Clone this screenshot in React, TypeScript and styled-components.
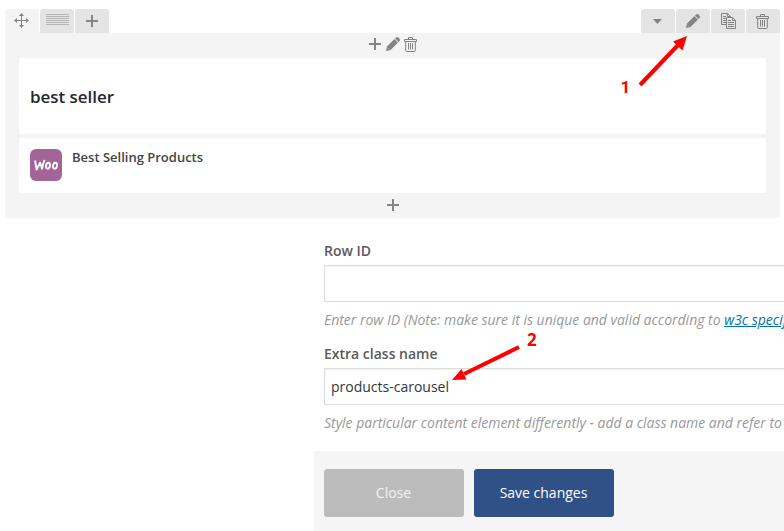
import React from "react";
import styled, { createGlobalStyle } from "styled-components";

const GlobalStyle = createGlobalStyle`
  * { box-sizing: border-box; }
  body {
    margin: 0;
    background: #fff;
    overflow: hidden;
    font-family: "Open Sans", sans-serif;
    font-size: 14px;
  }
`;

const Page = styled.main`
  position: relative;
  width: 784px;
  height: 531px;
  overflow: hidden;
  padding: 9px 0 0;
`;

const Builder = styled.section`
  width: 775px;
  margin-left: 5px;
`;

const Toolbar = styled.div`
  display: flex;
  justify-content: space-between;
  height: 24px;
`;

const TabGroup = styled.div`
  display: flex;
  gap: 1px;
`;

const Tab = styled.button<{ $active?: boolean }>`
  display: flex;
  width: 34px;
  height: 24px;
  padding: 0;
  border: 0;
  border-radius: 3px 3px 0 0;
  background: ${(p) => (p.$active ? "#f4f4f4" : "#e4e4e4")};
`;

const RowBody = styled.div`
  height: 185px;
  padding: 0 14px;
  background: #f4f4f4;
`;

const Controls = styled.div`
  display: flex;
  justify-content: center;
  height: 25px;
`;

const Card = styled.article<{ $height: number }>`
  display: flex;
  height: ${(p) => p.$height}px;
  padding: 11px;
  border-radius: 1px;
  background: #fff;
  & + & { margin-top: 4px; }
`;

const Heading = styled.h4`
  margin: 16px 0 0;
  font-size: 17px;
  line-height: 24px;
  font-weight: 600;
  color: #23282d;
  letter-spacing: -0.04px;
`;

const ElementTitle = styled.h5`
  margin: -2px 0 0 10px;
  font-size: 13px;
  line-height: 20px;
  font-weight: 600;
  color: #444;
`;

const Settings = styled.form`
  width: 520px;
  margin: 23px 0 0 314px;
`;

const Field = styled.div`
  height: 103px;
  padding-left: 10px;
`;

const Label = styled.label`
  display: block;
  height: 24px;
  line-height: 20px;
  font-weight: 600;
  color: #5b5b5b;
`;

const Input = styled.input`
  display: block;
  width: 600px;
  height: 37px;
  padding: 6px;
  border: 1px solid #ddd;
  border-radius: 0;
  outline: 0;
  box-shadow: inset 0 1px 2px rgba(0, 0, 0, 0.07);
  font: 14px "Open Sans", sans-serif;
  color: #32373c;
  background: #fff;
`;

const Hint = styled.p`
  margin: 8px 0 0;
  line-height: 20px;
  font-style: italic;
  letter-spacing: -0.016px;
  white-space: nowrap;
  color: #999;
`;

const Link = styled.a`
  color: #0073aa;
  text-decoration: underline;
`;

const Footer = styled.footer`
  display: flex;
  gap: 10px;
  height: 80px;
  margin-top: 4px;
  padding: 18px 10px;
  background: #f5f5f5;
`;

const Action = styled.button<{ $primary?: boolean }>`
  width: 140px;
  height: 48px;
  padding: 0 1px 2px 0;
  border: 0;
  border-radius: 3px;
  font: 14px "Open Sans", sans-serif;
  color: ${(p) => (p.$primary ? "#fff" : "#f3f3f3")};
  background: ${(p) => (p.$primary ? "#2f5187" : "#bcbcbc")};
`;

const Annotations = styled.svg`
  position: absolute;
  inset: 0;
  pointer-events: none;
`;

const Callout = styled.text<{ $family: string }>`
  font: 700 17px ${(p) => p.$family}, sans-serif;
  fill: #f00;
`;

const Glyph = styled.svg`
  display: block;
  flex: none;
  color: #848484;
`;

const Plus = () => <path d="M5 0h2v5h5v2H7v5H5V7H0V5h5z" fill="currentColor" />;

const Pencil = () => (
  <g fill="currentColor">
    <path d="M0 14l1-4.6L8.4 2l3.6 3.6L4.6 13z" />
    <path d="M9 1.4l1-1q1.2-.8 2.4.2l1 1q1 1.2.2 2.4l-1 1z" />
    <path d="M8.6 1.9l3.6 3.6" stroke="#d0d0d0" strokeWidth=".6" />
    <path d="M1.4 10.6l2 2" stroke="#d0d0d0" strokeWidth=".5" />
  </g>
);

const Trash = () => (
  <g fill="none" stroke="currentColor">
    <path d="M4.5 2V.5h4V2" />
    <path d="M.5 2.5h12v2H.5z" />
    <path d="M1.7 5v8.2q0 1.3 1.1 1.3h7.4q1.1 0 1.1-1.3V5M4.5 6v6.5M6.5 6v6.5M8.5 6v6.5" />
  </g>
);

const Copy = () => (
  <g fill="none" stroke="currentColor">
    <path d="M5.5 11.5h-5V.5h6l3 3v1M6.5.5v3h3" />
    <path d="M2 3.5h3M2 5.5h3M2 7.5h3M2 9.5h3" />
    <path d="M5.5 4.5h6l3 3v8h-9zM11.5 4.5v3h3M7 7.5h3M7 9.5h6M7 11.5h6M7 13.5h6" />
  </g>
);

const Move = () => (
  <g fill="currentColor">
    <path d="M7 2h1v11H7zM2 7h11v1H2z" />
    <path d="M7.5 0L10 3H5zM7.5 15L5 12h5zM0 7.5L3 5v5zM15 7.5L12 10V5z" />
  </g>
);

const TabIcon = ({ x, y, children }: { x: number; y: number; children: React.ReactNode }) => (
  <Glyph width="34" height="24">
    <g transform={`translate(${x} ${y})`}>{children}</g>
  </Glyph>
);

export default function App() {
  return (
    <>
      <GlobalStyle />
      <Page>
        <Builder>
          <Toolbar>
            <TabGroup>
              <Tab $active aria-label="Move row">
                <TabIcon x={9} y={4}><Move /></TabIcon>
              </Tab>
              <Tab aria-label="Row layout">
                <TabIcon x={6} y={5}>
                  <path d="M0 .5h23M0 2.5h23M0 4.5h23M0 6.5h23M0 8.5h23M0 10.5h23" stroke="#b5b5b5" />
                </TabIcon>
              </Tab>
              <Tab aria-label="Add column">
                <TabIcon x={11} y={6}><Plus /></TabIcon>
              </Tab>
            </TabGroup>
            <TabGroup>
              <Tab aria-label="Toggle row">
                <TabIcon x={12} y={10}><path d="M0 0h9L4.5 5z" fill="currentColor" /></TabIcon>
              </Tab>
              <Tab aria-label="Edit row">
                <TabIcon x={10} y={5}><Pencil /></TabIcon>
              </Tab>
              <Tab aria-label="Clone row">
                <TabIcon x={10} y={4}><Copy /></TabIcon>
              </Tab>
              <Tab aria-label="Delete row">
                <TabIcon x={10} y={5}><Trash /></TabIcon>
              </Tab>
            </TabGroup>
          </Toolbar>
          <RowBody>
            <Controls>
              <Glyph width="50" height="25">
                <g transform="translate(1 5)"><Plus /></g>
                <g transform="translate(18 4)"><Pencil /></g>
                <g transform="translate(36 4)"><Trash /></g>
              </Glyph>
            </Controls>
            <Card $height={76}>
              <Heading>best seller</Heading>
            </Card>
            <Card $height={55}>
              <Glyph width="32" height="32" aria-label="Woo">
                <rect width="32" height="32" rx="6" fill="#a46497" />
                <g fill="none" stroke="#fff" strokeWidth="1.9" strokeLinecap="round" strokeLinejoin="round">
                  <path d="M5.2 12.3l1.4 8.2 3.5-6.8 2 6q.7-5 2.2-8" />
                  <ellipse cx="18" cy="16.7" rx="1.9" ry="3" transform="rotate(12 18 16.7)" />
                  <ellipse cx="25" cy="16.7" rx="2" ry="3" transform="rotate(12 25 16.7)" />
                </g>
              </Glyph>
              <ElementTitle>Best Selling Products</ElementTitle>
            </Card>
            <Controls>
              <Glyph width="12" height="25">
                <g transform="translate(0 6)"><Plus /></g>
              </Glyph>
            </Controls>
          </RowBody>
        </Builder>
        <Settings>
          <Field>
            <Label>Row ID</Label>
            <Input />
            <Hint>
              Enter row ID (Note: make sure it is unique and valid according to <Link>w3c specification</Link>
            </Hint>
          </Field>
          <Field>
            <Label>Extra class name</Label>
            <Input defaultValue="products-carousel" />
            <Hint>Style particular content element differently - add a class name and refer to</Hint>
          </Field>
          <Footer>
            <Action type="button">Close</Action>
            <Action type="button" $primary>Save changes</Action>
          </Footer>
        </Settings>
        <Annotations width="784" height="531">
          <g stroke="#f00" strokeWidth="4" fill="#f00">
            <path d="M640 85L679 44M519 347L464 374" />
            <path stroke="none" d="M687 36L682.5 50.5 673 41.5zM452 380L461.5 369 466.5 379.5z" />
          </g>
          <Callout x="620.5" y="93" $family="Roboto">1</Callout>
          <Callout x="527" y="346" $family='"Open Sans"'>2</Callout>
        </Annotations>
      </Page>
    </>
  );
}
